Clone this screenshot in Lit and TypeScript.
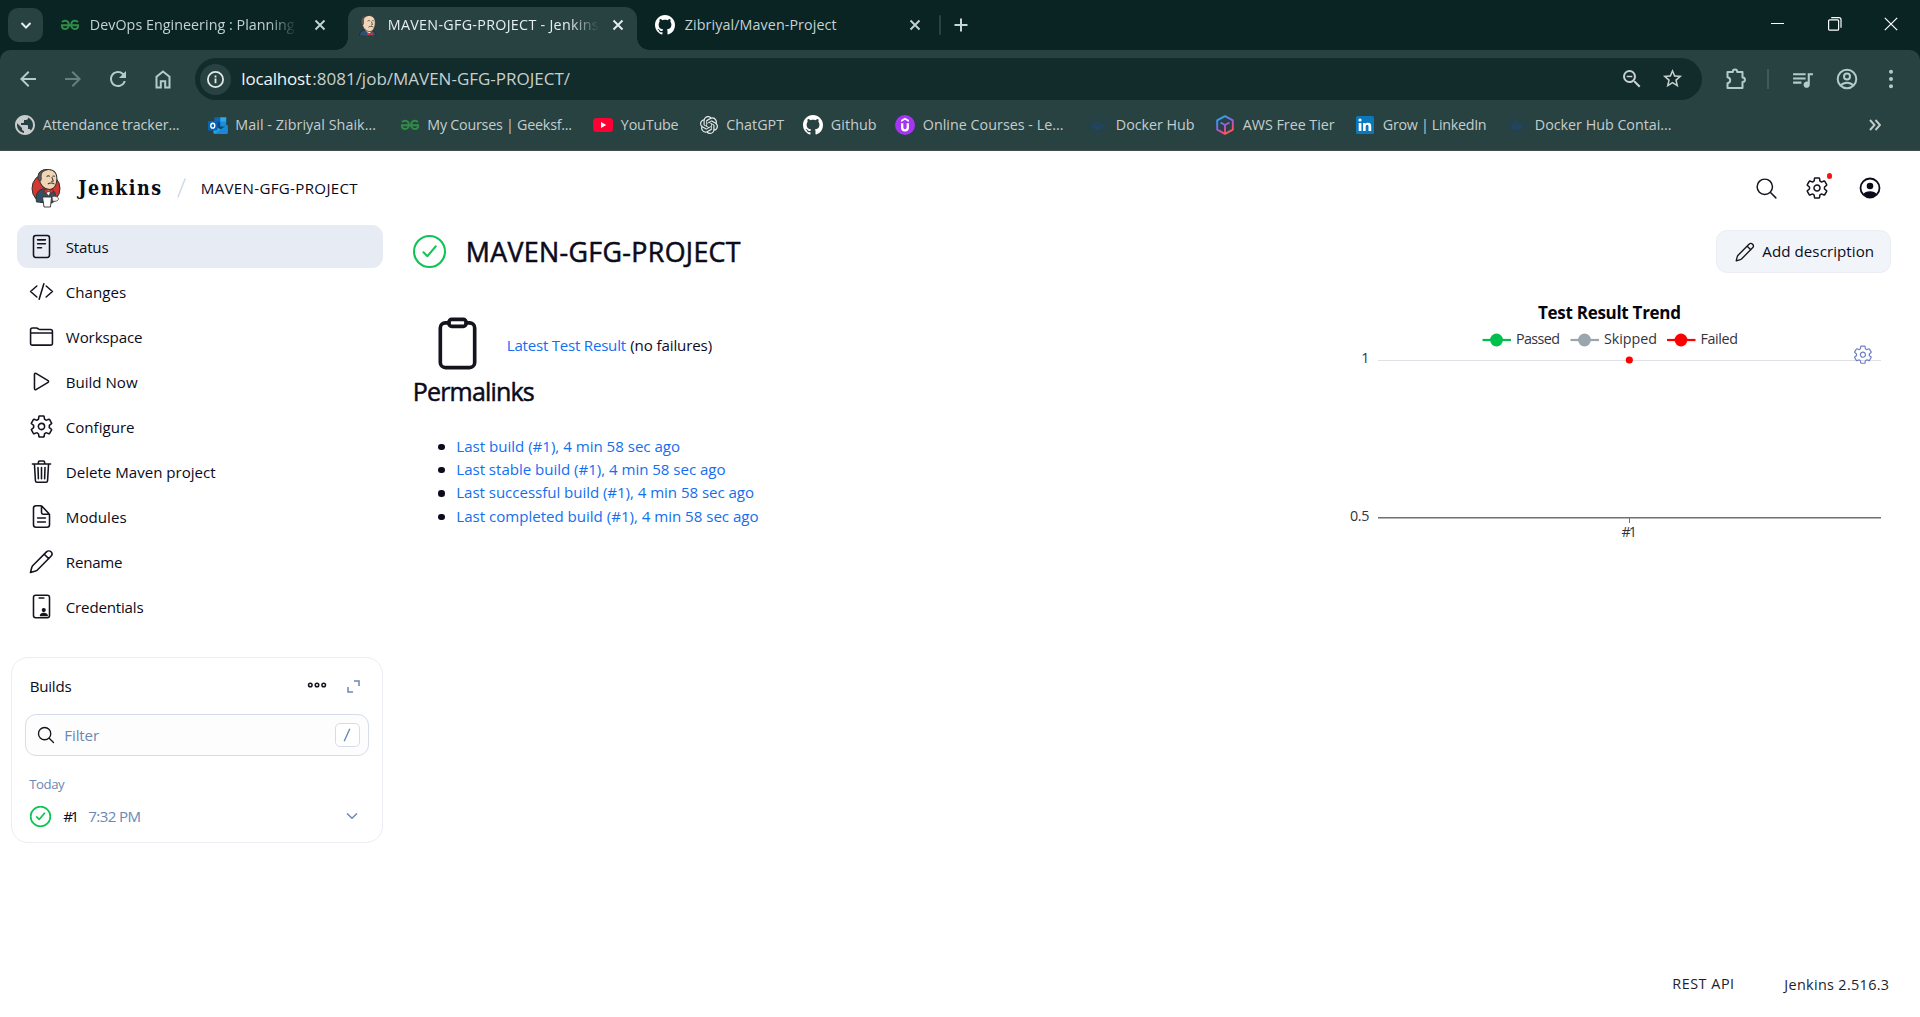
import { LitElement, html, svg, css } from "lit";
import { customElement, property } from "lit/decorators.js";
import { styleMap } from "lit/directives/style-map.js";
import { classMap } from "lit/directives/class-map.js";

/** One line of text whose tracking is adjusted so that it spans a set measure. */
@customElement("text-run")
class TextRun extends LitElement {
  @property() text = "";
  @property({ type: Number }) measure = 0;

  static styles = css`
    :host { display: inline-block; white-space: pre; flex: none; }
    .run { display: inline-block; margin-left: .8px; }
  `;

  firstUpdated() {
    this.fit();
    document.fonts?.ready.then(() => this.fit());
  }

  private fit() {
    const run = this.renderRoot.querySelector(".run") as HTMLElement;
    run.style.letterSpacing = "0px";
    const natural = run.getBoundingClientRect().width;
    run.style.letterSpacing = `${(this.measure + 0.8 - natural) / Math.max(1, this.text.length - 1)}px`;
    this.style.width = `${this.measure + 2}px`;
  }

  render() {
    return html`<span class="run">${this.text}</span>`;
  }
}

const t = (text: string, measure: number, cls = "") =>
  html`<text-run class=${cls} text=${text} measure=${measure}></text-run>`;

/* ---------- icon shapes ---------- */

const line = (body: unknown, size = 25, width = 32, cls = "ink") => html`
  <svg class=${cls} width=${size} height=${size} viewBox="0 0 512 512" fill="none" stroke="currentColor"
    stroke-width=${width} stroke-linecap="round" stroke-linejoin="round">${body}</svg>`;

const solid = (d: string, size = 24) => html`
  <svg width=${size} height=${size} viewBox="0 0 24 24" fill="currentColor"><path d=${d} /></svg>`;

const GEAR =
  "M262.29 192.31a64 64 0 1057.4 57.4 64.13 64.13 0 00-57.4-57.4zM416.39 256a154.34 154.34 0 01-1.53 20.79l45.21 35.46a10.81 10.81 0 012.45 13.75l-42.77 74a10.81 10.81 0 01-13.14 4.59l-44.9-18.08a16.11 16.11 0 00-15.17 1.75A164.48 164.48 0 01325 400.8a15.94 15.94 0 00-8.82 12.14l-6.73 47.89a11.08 11.08 0 01-10.68 9.17h-85.54a11.11 11.11 0 01-10.69-8.87l-6.72-47.82a16.07 16.07 0 00-9-12.22 155.3 155.3 0 01-21.46-12.57 16 16 0 00-15.11-1.71l-44.89 18.07a10.81 10.81 0 01-13.14-4.58l-42.77-74a10.8 10.8 0 012.45-13.75l38.21-30a16.05 16.05 0 006-14.08c-.36-4.17-.58-8.33-.58-12.5s.21-8.27.58-12.35a16 16 0 00-6.07-13.94l-38.19-30A10.81 10.81 0 0149.48 186l42.77-74a10.81 10.81 0 0113.14-4.59l44.9 18.08a16.11 16.11 0 0015.17-1.75A164.48 164.48 0 01187 111.2a15.94 15.94 0 008.82-12.14l6.73-47.89A11.08 11.08 0 01213.23 42h85.54a11.11 11.11 0 0110.69 8.87l6.72 47.82a16.07 16.07 0 009 12.22 155.3 155.3 0 0121.46 12.57 16 16 0 0015.11 1.71l44.89-18.07a10.81 10.81 0 0113.14 4.58l42.77 74a10.8 10.8 0 01-2.45 13.75l-38.21 30a16.05 16.05 0 00-6.05 14.08c.33 4.14.55 8.3.55 12.47z";

const SEARCH = svg`<path d="M221.09 64a157.09 157.09 0 10157.09 157.09A157.1 157.1 0 00221.09 64zM338.29 338.29L448 448" />`;
const PENCIL = svg`<path d="M30 482l28-108c4-14 10-25 21-36L358 59c25-25 69-25 93-2 24 24 24 66-1 92L172 430c-11 11-22 17-36 21zM312 108l92 90" />`;
const CHECK = svg`<circle cx="256" cy="256" r="240" /><path d="M352 176L224 328l-62-60" />`;

const GLYPHS: Record<string, unknown> = {
  status: svg`<rect x="92" y="32" width="328" height="448" rx="48" /><path d="M176 120h160M176 200h160M176 280h80" />`,
  changes: svg`<path d="M160 368L32 256l128-112M352 368l128-112-128-112M304 96l-96 320" />`,
  folder: svg`<path d="M440 432H72a40 40 0 01-40-40V120a40 40 0 0140-40h75.89a40 40 0 0122.19 6.72l27.84 18.56a40 40 0 0022.19 6.72H440a40 40 0 0140 40v240a40 40 0 01-40 40zM32 184h448" />`,
  play: svg`<path d="M112 111v290c0 17.44 17 28.52 31 20.16l247.9-148.37c12.12-7.25 12.12-26.33 0-33.58L143 90.84c-14-8.36-31 2.72-31 20.16z" />`,
  gear: svg`<path d=${GEAR} />`,
  trash: svg`<path d="M112 112l20 332c.95 18.49 14.4 32 32 32h184c17.67 0 30.87-13.51 32-32l20-332M70 104h372M192 104V64a24 24 0 0124-24h80a24 24 0 0124 24v40M256 176v230M184 176l8 230M328 176l-8 230" />`,
  doc: svg`<path d="M420 221.25V424a52 52 0 01-52 52H144a52 52 0 01-52-52V88a52 52 0 0152-52h98.75a32 32 0 0122.62 9.37l145.26 153.26a32 32 0 019.37 22.62zM256 44v132a32 32 0 0032 32h124M176 288h160M176 368h160" />`,
  pencil: PENCIL,
  card: svg`<rect x="92" y="26" width="328" height="460" rx="44" /><path d="M208 82h96" />
    <g fill="currentColor" stroke="none"><circle cx="302" cy="330" r="42" /><path d="M220 444c0-42 38-62 82-62s86 20 86 62v12H220z" /></g>`,
};

const GITHUB =
  "M8 0C3.58 0 0 3.58 0 8c0 3.54 2.29 6.53 5.47 7.59.4.07.55-.17.55-.38 0-.19-.01-.82-.01-1.49-2.01.37-2.53-.49-2.69-.94-.09-.23-.48-.94-.82-1.13-.28-.15-.68-.52-.01-.53.63-.01 1.08.58 1.23.82.72 1.21 1.87.87 2.33.66.07-.52.28-.87.51-1.07-1.78-.2-3.64-.89-3.64-3.95 0-.87.31-1.59.82-2.15-.08-.2-.36-1.02.08-2.12 0 0 .67-.21 2.2.82.64-.18 1.32-.27 2-.27s1.36.09 2 .27c1.53-1.04 2.2-.82 2.2-.82.44 1.1.16 1.92.08 2.12.51.56.82 1.27.82 2.15 0 3.07-1.87 3.75-3.65 3.95.29.25.54.73.54 1.48 0 1.07-.01 1.93-.01 2.2 0 .21.15.46.55.38A8.01 8.01 0 0016 8c0-4.42-3.58-8-8-8z";
const OPENAI =
  "M22.2819 9.8211a5.9847 5.9847 0 0 0-.5157-4.9108 6.0462 6.0462 0 0 0-6.5098-2.9A6.0651 6.0651 0 0 0 4.9807 4.1818a5.9847 5.9847 0 0 0-3.9977 2.9 6.0462 6.0462 0 0 0 .7427 7.0966 5.98 5.98 0 0 0 .511 4.9107 6.051 6.051 0 0 0 6.5146 2.9001A5.9847 5.9847 0 0 0 13.2599 24a6.0557 6.0557 0 0 0 5.7718-4.2058 5.9894 5.9894 0 0 0 3.9977-2.9001 6.0557 6.0557 0 0 0-.7475-7.0729zm-9.022 12.6081a4.4755 4.4755 0 0 1-2.8764-1.0408l.1419-.0804 4.7783-2.7582a.7948.7948 0 0 0 .3927-.6813v-6.7369l2.02 1.1686a.071.071 0 0 1 .038.052v5.5826a4.504 4.504 0 0 1-4.4945 4.4944zm-9.6607-4.1254a4.4708 4.4708 0 0 1-.5346-3.0137l.142.0852 4.783 2.7582a.7712.7712 0 0 0 .7806 0l5.8428-3.3685v2.3324a.0804.0804 0 0 1-.0332.0615L9.74 19.9502a4.4992 4.4992 0 0 1-6.1408-1.6464zM2.3408 7.8956a4.485 4.485 0 0 1 2.3655-1.9728V11.6a.7664.7664 0 0 0 .3879.6765l5.8144 3.3543-2.0201 1.1685a.0757.0757 0 0 1-.071 0l-4.8303-2.7865A4.504 4.504 0 0 1 2.3408 7.872zm16.5963 3.8558L13.1038 8.364 15.1192 7.2a.0757.0757 0 0 1 .071 0l4.8303 2.7913a4.4944 4.4944 0 0 1-.6765 8.1042v-5.6772a.79.79 0 0 0-.407-.667zm2.0107-3.0231l-.142-.0852-4.7735-2.7818a.7759.7759 0 0 0-.7854 0L9.409 9.2297V6.8974a.0662.0662 0 0 1 .0284-.0615l4.8303-2.7866a4.4992 4.4992 0 0 1 6.6802 4.66zM8.3065 12.863l-2.02-1.1638a.0804.0804 0 0 1-.038-.0567V6.0742a4.4992 4.4992 0 0 1 7.3757-3.4537l-.142.0805L8.704 5.459a.7948.7948 0 0 0-.3927.6813zm1.0976-2.3654l2.602-1.4998 2.6069 1.4998v2.9994l-2.5974 1.4997-2.6067-1.4997Z";
const GLOBE =
  "M12 2C6.48 2 2 6.48 2 12s4.48 10 10 10 10-4.48 10-10S17.52 2 12 2zm-1 17.93c-3.95-.49-7-3.85-7-7.93 0-.62.08-1.21.21-1.79L9 15v1c0 1.1.9 2 2 2v1.93zm6.9-2.54c-.26-.81-1-1.39-1.9-1.39h-1v-3c0-.55-.45-1-1-1H8v-2h2c.55 0 1-.45 1-1V7h2c1.1 0 2-.9 2-2v-.41c2.93 1.19 5 4.06 5 7.41 0 2.08-.8 3.97-2.1 5.39z";

const gfg = html`<svg width="20" height="20" viewBox="0 0 20 20" fill="none" stroke="#2f8d46" stroke-width="1.9">
  <path d="M1 10.300h18M2 7.200C3 6 4.200 5.700 5.400 5.800 7.700 6 8.800 7.900 8.800 10c0 2.300-1.400 4-3.600 4S1.900 12.600 1.700 10.300M18 7.200c-1-1.200-2.200-1.500-3.400-1.400-2.300.2-3.400 2.100-3.400 4.200 0 2.300 1.400 4 3.600 4s3.300-1.400 3.500-3.700" />
</svg>`;

const github = html`<svg width="20" height="20" viewBox="0 0 16 16" fill="#fff"><path d=${GITHUB} /></svg>`;

const docker = html`<svg width="20" height="20" viewBox="0 0 20 20">
  <circle cx="10" cy="10" r="9.300" fill="none" stroke="#21435c" />
  <path d="M3.400 10h10.500c.8 0 1.200-1.200.8-2.200.8.300 1.200 1 1.300 1.600.6-.1 1.300 0 1.600.3-.3.800-1 1.200-2 1.200-1 2.800-3 4.300-6.200 4.300-3.800 0-6-1.800-6-5.200zM4.600 7.800h7.600v1.700H4.600zM6.800 6h3.700v1.500H6.800zM8.800 4.300h1.800v1.500H8.800z" fill="#1f4464" />
</svg>`;

const BRANDS: Record<string, unknown> = {
  globe: html`<svg width="20" height="22" viewBox="2 1 20 22" fill="#c7cccc"><path d=${GLOBE} /></svg>`,
  outlook: html`<svg width="20" height="19" viewBox="0 0 22 20">
    <path d="M7 1h13v10H7z" fill="#1066b5" /><path d="M13.500 1H20v5h-6.500z" fill="#32a9e7" /><path d="M7 6h6.500v5H7z" fill="#0a4a8c" />
    <path d="M13.500 6H20v5h-6.500z" fill="#1490df" />
    <path d="M6 9.500l8 5 7.500-5V18a1 1 0 01-1 1H7a1 1 0 01-1-1z" fill="#28a8ea" /><path d="M21.500 9.500V18a1 1 0 01-1 1H7z" fill="#1988d9" />
    <rect x="0" y="5" width="10.500" height="10.500" rx="1" fill="#0364b8" /><ellipse cx="5.250" cy="10.250" rx="2.200" ry="2.700" fill="none" stroke="#fff" stroke-width="1.500" />
  </svg>`,
  gfg,
  youtube: html`<svg width="20" height="20" viewBox="0 0 20 20"><rect y="3" width="20" height="14" rx="3.500" fill="#ff0033" /><path d="M8 7l5.200 3L8 13z" fill="#fff" /></svg>`,
  openai: html`<svg width="18" height="18" viewBox="0 0 24 24" fill="#e6eaea"><path d=${OPENAI} /></svg>`,
  github,
  udemy: html`<svg width="20" height="20" viewBox="0 0 20 20"><circle cx="10" cy="10" r="10" fill="#a435f0" />
    <path d="M10 2.800l3.900 2.200v2L10 4.800 6.100 7V5z" fill="#fff" /><path d="M7.200 8.300v4.200c0 1.900 1.200 2.900 2.800 2.900s2.800-1 2.800-2.900V8.300" fill="none" stroke="#fff" stroke-width="2.300" /></svg>`,
  docker,
  aws: html`<svg width="20" height="20" viewBox="0 0 20 20" fill="none" stroke="url(#aws-tint)" stroke-width="1.900" stroke-linejoin="round">
    <defs><linearGradient id="aws-tint" x1="4" y1="1" x2="15" y2="19" gradientUnits="userSpaceOnUse"><stop stop-color="#18b8e8" /><stop offset=".45" stop-color="#8a63f5" /><stop offset=".75" stop-color="#f0487a" /><stop offset="1" stop-color="#ff6a50" /></linearGradient></defs>
    <path d="M10 1.200l7.800 4.200v9.200L10 18.800l-7.800-4.200V5.400zM5.500 7.500L10 10l4.500-2.500M10 10v8.500" /></svg>`,
  linkedin: html`<svg width="20" height="20" viewBox="0 0 20 20"><rect x="1" y="1" width="18" height="18" rx="1.500" fill="#0a78bd" />
    <g fill="#fff"><circle cx="5" cy="5" r="1.600" /><path d="M3.700 7.900h2.700v8H3.700zM8 7.900h2.500v1.200c.5-.9 1.500-1.400 2.700-1.400 2.300 0 3 1.500 3 3.600v4.600h-2.700v-4.100c0-1.200-.2-2-1.300-2s-1.500.8-1.500 2v4.100H8z" /></g></svg>`,
};

const butlerHead = svg`
  <path d="M7.500 12C5 4 12 0 20 .8c8 .4 11.500 6 10.500 14.500-.5 6-3.500 12-9 12.500C13 27.500 9 21 7.500 12z" fill="#f0d6b7" stroke="#33302e" stroke-width="1.300" />
  <path d="M6.600 14C5 5 11 .6 19 .8c-5 1.200-8 3.400-8.500 7.200-.3 3 .8 5-.5 8-1.500 0-3-.5-3.400-2z" fill="#5b5a5c" stroke="#33302e" stroke-width="1" />
  <path d="M17.500 10.200c1.500-1.200 3-1.200 4 0M25 10c1-.9 2.200-.9 3 0M24 11l2 5-2.500.8M19 20.500c2-2 6-2 8.500-.2" fill="none" stroke="#33302e" stroke-width="1.300" />`;

const favicon = html`<svg width="18" height="21" viewBox="2 0 34 38" preserveAspectRatio="none">
  <path d="M3 38c0-7 4-10 12-11h9c6 1 10 4 10 11z" fill="#2f4f70" stroke="#222" />
  <path d="M14 27l7 8 6-8z" fill="#fff" />
  <g transform="translate(-1 0) scale(1.1 1.080)">${butlerHead}</g>
  <path d="M18 31l5 2 5-2v6.500l-5-2-5 2z" fill="#d83833" /></svg>`;

const butler = html`<svg class="logo" width="30" height="39" viewBox="0 0 30 39">
  <ellipse cx="15" cy="19.500" rx="14" ry="14.800" fill="#d33833" stroke="#33302e" />
  <path d="M5.500 33c-1-6 0-11.500 6-13h7.500c5 1.500 6.500 6 6 11l-4 3z" fill="#335061" stroke="#26333b" stroke-width=".9" />
  <g transform="translate(2 0) scale(.78 .74)">${butlerHead}</g>
  <path d="M13.500 21l4 5.500 3-5.500z" fill="#fff" /><path d="M13.500 20l4.200 1.700 4.200-1.700v4l-4.200-1.300-4.200 1.300z" fill="#d33833" stroke="#7b1a17" stroke-width=".6" />
  <path d="M11.500 28h9l-1 10h-6.500z" fill="#fff" stroke="#33302e" stroke-width=".9" />
  <path d="M21 28c2-1.500 6-.5 6.500 1.500.4 2-2.500 3.500-6 2.500z" fill="#f3f0ee" stroke="#4a4644" stroke-width=".8" />
</svg>`;

const cross = html`<svg width="12" height="12" viewBox="0 0 12 12" stroke="currentColor" stroke-width="1.900"><path d="M1.500 1.500l9 9M10.500 1.500l-9 9" /></svg>`;

/* ---------- data ---------- */

const bookmarks: [string, string, number, number][] = [
  ["globe", "Attendance tracker...", 136, 192.5],
  ["outlook", "Mail - Zibriyal Shaik...", 140, 192],
  ["gfg", "My Courses | Geeksf...", 144, 193.5],
  ["youtube", "YouTube", 57, 105.5],
  ["openai", "ChatGPT", 57, 104.5],
  ["github", "Github", 45, 92],
  ["udemy", "Online Courses - Le...", 140, 193],
  ["docker", "Docker Hub", 78, 127],
  ["aws", "AWS Free Tier", 91, 140],
  ["linkedin", "Grow | LinkedIn", 103, 152],
  ["docker", "Docker Hub Contai...", 136, 190],
];

const tasks: [string, string, number][] = [
  ["status", "Status", 42],
  ["changes", "Changes", 59.5],
  ["folder", "Workspace", 76],
  ["play", "Build Now", 71],
  ["gear", "Configure", 68],
  ["trash", "Delete Maven project", 149],
  ["doc", "Modules", 60],
  ["pencil", "Rename", 56],
  ["card", "Credentials", 77],
];

const permalinks: [string, number][] = [
  ["Last build (#1), 4 min 58 sec ago", 223],
  ["Last stable build (#1), 4 min 58 sec ago", 268.5],
  ["Last successful build (#1), 4 min 58 sec ago", 297],
  ["Last completed build (#1), 4 min 58 sec ago", 301.5],
];

const legend: [string, string, number, number, number][] = [
  ["Passed", "#00c04d", 1496.5, 1516, 44],
  ["Skipped", "#9aa6ae", 1584.5, 1604, 53],
  ["Failed", "#ff0000", 1681, 1700.5, 37.5],
];

/* ---------- browser frame ---------- */

@customElement("browser-frame")
class BrowserFrame extends LitElement {
  static styles = css`
    :host { display: block; background: #0a2424; color: #c3d3d3; font: 14.300px/20px "Open Sans", "Noto Sans", sans-serif; }
    svg { display: block; flex: none; }
    .strip { display: flex; height: 50px; align-items: flex-start; }
    .search-tabs { width: 35px; height: 34px; margin: 8px 0 0 8px; border-radius: 10px; background: #284141; display: grid; place-items: center; color: #e3ecec; }
    .tab { display: flex; align-items: center; box-sizing: border-box; height: 43px; margin-top: 7px; padding-bottom: 7px; position: relative; }
    .tab.first { width: 305px; padding-left: 17px; }
    .tab.live { width: 289px; padding-left: 11px; background: #284141; border-radius: 12px 12px 0 0; color: #e6eeee; }
    .tab.last { width: 302px; padding-left: 18px; }
    .tab.live::before, .tab.live::after { content: ""; position: absolute; bottom: 0; width: 12px; height: 12px; }
    .tab.live::before { left: -12px; background: radial-gradient(circle at 0 0, transparent 11.500px, #284141 12px); }
    .tab.live::after { right: -12px; background: radial-gradient(circle at 100% 0, transparent 11.500px, #284141 12px); }
    .title { overflow: hidden; height: 20px; }
    .first .title { width: 208px; margin: 0 17px 0 9px; -webkit-mask-image: linear-gradient(90deg, #000 86%, transparent); }
    .live .title { width: 212px; margin: 0 13px 0 10px; -webkit-mask-image: linear-gradient(90deg, #000 86%, transparent); }
    .last .title { width: 214px; margin: 0 11px 0 9px; }
    .bar { width: 2px; height: 20px; background: #284141; border-radius: 1px; margin-top: 15px; }
    .plus { margin: 18px 0 0 13px; }
    .controls { display: flex; align-items: center; margin-left: auto; height: 48px; gap: 42.500px; padding-right: 22px; color: #fff; }
    .sheet { background: #284141; border-radius: 10px 10px 0 0; height: 100px; box-sizing: border-box; padding-top: 8px; }
    .nav { display: flex; align-items: center; height: 42px; color: #b3cbcb; }
    .buttons { display: flex; width: 195px; box-sizing: border-box; padding-left: 15.500px; gap: 21px; }
    .dim { opacity: .45; }
    .omni { display: flex; align-items: center; width: 1507px; height: 42px; box-sizing: border-box; border-radius: 21px; background: #122b2b; padding: 0 18px 0 5px; color: #c7cfcf; }
    .info { width: 31px; height: 31px; border-radius: 50%; background: #284141; display: grid; place-items: center; margin-right: 9.500px; }
    .url { font-size: 17px; line-height: 24px; display: flex; }
    .host { color: #f2f6f6; }
    .tools { display: flex; gap: 17px; margin-left: auto; }
    .right { display: flex; align-items: center; flex: 1; padding-left: 22px; }
    .rule { width: 2px; height: 20px; background: #3f5a5a; margin: 0 21px 0 19px; }
    .me { margin-left: 21px; }
    .kebab { margin-left: 21px; }
    .marks { display: flex; align-items: center; height: 50px; padding-left: 15px; color: #c5cdcd; }
    .mark { display: flex; align-items: center; gap: 7px; }
    .mark .ico { width: 20px; height: 22px; display: grid; place-items: center; }
    .more { margin-left: auto; padding-right: 39px; }
    .edge { height: 1px; background: #454c4f; }
  `;

  render() {
    return html`
      <div class="strip">
        <div class="search-tabs"><svg width="12" height="9" viewBox="0 0 12 9" fill="none" stroke="currentColor" stroke-width="2"><path d="M1.500 2L6 6.500 10.500 2" /></svg></div>
        <div class="tab first">${gfg}<div class="title">${t("DevOps Engineering : Planning", 204)}</div>${cross}</div>
        <div class="tab live">${favicon}<div class="title">${t("MAVEN-GFG-PROJECT - Jenkins", 210)}</div>${cross}</div>
        <div class="tab last">${github}<div class="title">${t("Zibriyal/Maven-Project", 151)}</div>${cross}</div>
        <div class="bar"></div>
        <svg class="plus" width="14" height="14" viewBox="0 0 14 14" stroke="#c7d6d6" stroke-width="2"><path d="M7 .5v13M.5 7h13" /></svg>
        <div class="controls">
          <svg width="14" height="14" viewBox="0 0 14 14" stroke="currentColor"><path d="M0 6.500h13" /></svg>
          <svg width="14" height="14" viewBox="0 0 14 14" fill="none" stroke="currentColor" stroke-width="1.200"><rect x=".6" y="2.800" width="10" height="10.400" rx="1" /><path d="M3.200.700h7.800a2 2 0 012 2v8" /></svg>
          <svg width="14" height="14" viewBox="0 0 14 14" stroke="currentColor" stroke-width="1.200"><path d="M.8.800l12.400 12.400M13.200.800L.8 13.200" /></svg>
        </div>
      </div>
      <div class="sheet">
        <div class="nav">
          <div class="buttons">
            ${solid("M20 11H7.830l5.590-5.590L12 4l-8 8 8 8 1.410-1.410L7.830 13H20v-2z", 24)}
            <div class="dim">${solid("M4 11h12.170l-5.590-5.590L12 4l8 8-8 8-1.410-1.410L16.170 13H4v-2z", 24)}</div>
            ${solid("M17.650 6.350A7.958 7.958 0 0012 4c-4.420 0-7.990 3.580-7.990 8s3.570 8 7.990 8c3.730 0 6.840-2.550 7.730-6h-2.080A5.990 5.990 0 0112 18c-3.310 0-6-2.690-6-6s2.690-6 6-6c1.660 0 3.140.690 4.220 1.780L13 11h7V4l-2.350 2.350z", 24)}
            <svg width="24" height="24" viewBox="0 0 24 24" fill="none" stroke="currentColor" stroke-width="2"><path d="M5.500 9.800L12 4.500l6.500 5.300v10.700h-4.300v-6.200H9.800v6.200H5.500z" /></svg>
          </div>
          <div class="omni">
            <div class="info"><svg width="19" height="19" viewBox="0 0 19 19" fill="none" stroke="#e3e8e8" stroke-width="1.800"><circle cx="9.500" cy="9.500" r="7.600" /><path d="M9.500 8.600v4.700M9.500 5.400v2" /></svg></div>
            <div class="url">${t("localhost", 69, "host")}${t(":8081/job/MAVEN-GFG-PROJECT/", 257)}</div>
            <div class="tools">
              ${solid("M15.500 14h-.790l-.280-.270A6.471 6.471 0 0016 9.500 6.500 6.500 0 109.500 16c1.610 0 3.090-.590 4.230-1.570l.270.280v.790l5 4.990L20.490 19l-4.990-5zm-6 0C7.010 14 5 11.990 5 9.500S7.010 5 9.500 5 14 7.010 14 9.500 11.990 14 9.500 14zM6.700 8.700h5.600v1.600H6.700z", 24)}
              ${solid("M22 9.240l-7.190-.620L12 2 9.190 8.630 2 9.240l5.460 4.730L5.820 21 12 17.270 18.180 21l-1.630-7.030L22 9.240zM12 15.400l-3.760 2.270 1-4.280-3.320-2.880 4.380-.380L12 6.100l1.710 4.040 4.380.380-3.320 2.880 1 4.280L12 15.400z", 23)}
            </div>
          </div>
          <div class="right">
            <svg width="24" height="24" viewBox="0 0 24 24" fill="none" stroke="currentColor" stroke-width="2" stroke-linejoin="round"><path d="M4 5h4.800c0-3.300 4.400-3.300 4.400 0H18.500v5.500c3.200 0 3.200 4.400 0 4.400V21H3.500v-4.800c3.600-.6 3.600-5.400 0-6V5z" /></svg>
            <div class="rule"></div>
            ${solid("M15 6H3v2h12V6zm0 4H3v2h12v-2zM3 16h8v-2H3v2zM17 6v8.180c-.310-.110-.650-.180-1-.180-1.660 0-3 1.340-3 3s1.340 3 3 3 3-1.340 3-3V8h3V6h-5z", 25)}
            <svg class="me" width="22" height="22" viewBox="0 0 22 22" fill="none" stroke="currentColor" stroke-width="2"><circle cx="11" cy="11" r="9.300" /><circle cx="11" cy="8.500" r="3" /><path d="M4.500 17.500c3.500-3.800 9.500-3.800 13 0" /></svg>
            <svg class="kebab" width="24" height="24" viewBox="0 0 24 24" fill="currentColor"><circle cx="12" cy="4.700" r="2" /><circle cx="12" cy="12" r="2" /><circle cx="12" cy="19.300" r="2" /></svg>
          </div>
        </div>
        <div class="marks">
          ${bookmarks.map(
            ([icon, name, measure, slot]) => html`
              <div class="mark" style=${styleMap({ width: `${slot}px` })}><span class="ico">${BRANDS[icon]}</span>${t(name, measure)}</div>`
          )}
          <div class="more"><svg width="12" height="12" viewBox="0 0 12 12" fill="none" stroke="currentColor" stroke-width="1.900"><path d="M1 1l4.500 5L1 11M6.500 1L11 6l-4.500 5" /></svg></div>
        </div>
      </div>
      <div class="edge"></div>
    `;
  }
}

/* ---------- trend chart ---------- */

@customElement("trend-chart")
class TrendChart extends LitElement {
  static styles = css`
    :host { display: block; font-family: "Open Sans", "Noto Sans", sans-serif; }
    svg { display: block; }
    .title { font-size: 17px; font-weight: 700; fill: #05050f; }
    .label { font-size: 14.300px; fill: #33333f; }
  `;

  render() {
    return html`
      <svg width="560" height="250" viewBox="1340 300 560 250">
        <text class="title" x="1538" y="319" textLength="143">Test Result Trend</text>
        <path d="M1378 360.500H1881" stroke="#dfe0e6" />
        <path d="M1378 517.800H1881" stroke="#6f6f78" stroke-width="1.500" />
        <path d="M1629.500 518v5" stroke="#6f6f78" />
        ${legend.map(
          ([name, color, cx, tx, len]) => svg`
            <path d="M${cx - 14} 340h28.500" stroke=${color} stroke-width="2.200" />
            <circle cx=${cx} cy="340" r="6.400" fill=${color} />
            <text class="label" x=${tx} y="344" textLength=${len}>${name}</text>`
        )}
        <circle cx="1629.300" cy="360" r="3.600" fill="#ff0000" />
        <text class="label" x="1369.500" y="363" text-anchor="end">1</text>
        <text class="label" x="1350" y="521" textLength="19.500">0.5</text>
        <text class="label" x="1621.500" y="536.700" textLength="15.500">#1</text>
        <g transform="translate(1852.700 344.500) scale(.0399)" fill="none" stroke="#6c7fc4" stroke-width="30" stroke-linejoin="round"><path d=${GEAR} /></g>
      </svg>`;
  }
}

/* ---------- page ---------- */

@customElement("app-root")
class AppRoot extends LitElement {
  static styles = css`
    :host { display: flex; flex-direction: column; width: 1920px; height: 1017px; overflow: hidden; background: #fff; color: #0b0b1c; font: 15.100px/22px "Open Sans", "Noto Sans", sans-serif; }
    svg { display: block; flex: none; }
    .ink { color: #14141f; }
    .top { display: flex; align-items: center; height: 74px; padding: 0 39.500px 0 31px; box-sizing: border-box; }
    .logo { margin-top: 1px; }
    .brand { font: 700 19.500px/26px "DejaVu Serif Condensed", "DejaVu Serif", serif; margin: 2px 15px 0 16.500px; }
    .crumb { margin: -1px 0 0 14.500px; }
    .actions { display: flex; align-items: center; margin-left: auto; }
    .badge { position: relative; margin: 0 29.500px 0 26px; }
    .badge::after { content: ""; position: absolute; right: -3px; top: -3px; width: 5.500px; height: 5.500px; border-radius: 50%; background: #f41616; }
    .cols { display: flex; flex: 1; }
    .side { width: 372px; padding-left: 11px; box-sizing: content-box; }
    .tasks { display: flex; flex-direction: column; gap: 2px; margin-left: 6px; }
    .task { display: flex; align-items: center; gap: 11px; height: 43px; padding: 0 12px; border-radius: 11px; }
    .task.on { background: #e7ebf3; }
    .card { margin-top: 29px; height: 186px; box-sizing: border-box; border: 1.500px solid #ececf4; border-radius: 17px; padding: 15px 13px 0 12.500px; }
    .head { display: flex; align-items: center; height: 26px; padding: 0 9.500px 0 4.500px; }
    .head .dots { margin: -2px 19.500px 0 auto; }
    .filter { display: flex; align-items: center; height: 42px; box-sizing: border-box; border: 1.500px solid #d6dcea; border-radius: 11px; background: #fdfdfe; margin-top: 15px; padding: 0 8.500px 0 10px; }
    .filter text-run { margin-top: -1px; }
    .soft { color: #6b88b4; }
    .filter .soft { margin-left: 8px; }
    .key { display: grid; place-items: center; width: 23px; height: 22px; border: 1px solid #d6dcea; border-radius: 5px; background: #fff; margin-left: auto; }
    .today { font-size: 13.200px; margin: 17px 0 0 4px; height: 22px; }
    .build { display: flex; align-items: center; height: 22px; margin-top: 10px; padding: 0 11.500px 0 5px; }
    .green .ink { color: #0fc355; }
    .build .num { margin-left: 12px; }
    .build .soft { margin-left: 8px; }
    .build .down { margin: 0 0 0 auto; }
    .main { flex: 1; display: flex; flex-direction: column; padding: 5px 29px 0 29px; }
    .hero { display: flex; align-items: center; height: 43px; padding-left: 1px; }
    .hero .green { margin-top: -1px; }
    .hero .h1 { font-size: 26.800px; line-height: 36px; -webkit-text-stroke: .55px currentColor; margin: 0 0 0 19px; }
    .button { display: flex; align-items: center; margin-left: auto; width: 175px; height: 43px; box-sizing: border-box; border: 1px solid #eaeef4; border-radius: 11px; background: #f1f4f8; padding-left: 18px; gap: 6.500px; }
    .button text-run { margin-top: -2px; }
    .body { display: flex; justify-content: space-between; }
    .left { padding-top: 43px; }
    .test { display: flex; align-items: center; height: 54px; padding-left: 18px; }
    .link { color: #146ef0; }
    .test .link { margin-left: 21px; }
    .test text-run { margin-top: 3px; }
    .test .plain { margin-left: 3px; }
    .h2 { display: block; font-size: 25px; line-height: 34px; -webkit-text-stroke: .5px currentColor; margin: 4px 0 0 0; }
    .list { list-style: none; margin: 26px 0 0; padding: 0 0 0 26px; }
    .list li { display: flex; align-items: center; height: 23.300px; gap: 11px; }
    .list li::before { content: ""; width: 6.500px; height: 6.500px; margin-top: 2.500px; border-radius: 50%; background: #0b0b1c; }
    .chart { padding-top: 27px; margin-right: -9px; }
    .foot { display: flex; justify-content: flex-end; height: 43px; padding-right: 30.500px; font-size: 14.400px; color: #1d1d2c; }
    .foot text-run { margin-top: -1px; }
    .foot .ver { margin: 0 0 0 49px; }
  `;

  render() {
    return html`
      <browser-frame></browser-frame>
      <header class="top">
        ${butler}${t("Jenkins", 82, "brand")}
        <svg width="9" height="20" viewBox="0 0 9 20" stroke="#cfdbe9" stroke-width="1.500" stroke-linecap="round"><path d="M8 1L1 19" /></svg>
        ${t("MAVEN-GFG-PROJECT", 156, "crumb")}
        <div class="actions">
          ${line(SEARCH, 25, 30)}
          <div class="badge">${line(GLYPHS.gear, 24)}</div>
          <svg width="22" height="22" viewBox="0 0 22 22"><circle cx="11" cy="11" r="9.500" fill="none" stroke="#0b0b1c" stroke-width="1.800" /><circle cx="11" cy="9" r="3.300" fill="#0b0b1c" /><path d="M4.200 17.200c2-4 11.600-4 13.600 0-3.500 4-10 4-13.600 0z" fill="#0b0b1c" /></svg>
        </div>
      </header>
      <div class="cols">
        <aside class="side">
          <nav class="tasks">
            ${tasks.map(
              ([icon, name, measure], i) => html`
                <div class=${classMap({ task: true, on: i === 0 })}>${line(GLYPHS[icon])}${t(name, measure)}</div>`
            )}
          </nav>
          <section class="card">
            <div class="head">
              ${t("Builds", 41)}
              <svg class="dots" width="20" height="8" viewBox="0 0 20 8" fill="none" stroke="#14141f" stroke-width="1.500"><circle cx="3.300" cy="4" r="1.800" /><circle cx="10" cy="4" r="1.800" /><circle cx="16.700" cy="4" r="1.800" /></svg>
              <svg width="13" height="13" viewBox="0 0 13 13" fill="none" stroke="#6b88b4" stroke-width="1.500"><path d="M7 1h5v5M1 7v5h5" /></svg>
            </div>
            <div class="filter">
              ${line(SEARCH, 20, 34)}${t("Filter", 34, "soft")}
              <span class="key"><svg width="8" height="14" viewBox="0 0 8 14" stroke="#6b88b4" stroke-width="1.400"><path d="M6.800.800L1.200 13.200" /></svg></span>
            </div>
            <div class="today">${t("Today", 34.5, "soft")}</div>
            <div class="build">
              <span class="green">${line(CHECK, 21, 42)}</span>${t("#1", 15, "num")}${t("7:32 PM", 52, "soft")}
              <svg class="down" width="12" height="8" viewBox="0 0 12 8" fill="none" stroke="#6b88b4" stroke-width="1.500"><path d="M1 1.500l5 4.700 5-4.700" /></svg>
            </div>
          </section>
        </aside>
        <main class="main">
          <div class="hero">
            <span class="green">${line(CHECK, 33, 32)}</span>${t("MAVEN-GFG-PROJECT", 274, "h1")}
            <div class="button">${line(PENCIL, 20, 34)}${t("Add description", 111)}</div>
          </div>
          <div class="body">
            <div class="left">
              <div class="test">
                ${line(
                  svg`<path d="M336 64h32a48 48 0 0148 48v320a48 48 0 01-48 48H144a48 48 0 01-48-48V112a48 48 0 0148-48h32" /><rect x="176" y="32" width="160" height="64" rx="26" />`,
                  55, 34
                )}
                ${t("Latest Test Result", 118.5, "link")}${t("(no failures)", 81, "plain")}
              </div>
              ${t("Permalinks", 121, "h2")}
              <ul class="list">${permalinks.map(([name, measure]) => html`<li>${t(name, measure, "link")}</li>`)}</ul>
            </div>
            <trend-chart class="chart"></trend-chart>
          </div>
        </main>
      </div>
      <footer class="foot">${t("REST API", 61)}${t("Jenkins 2.516.3", 104, "ver")}</footer>
    `;
  }
}
